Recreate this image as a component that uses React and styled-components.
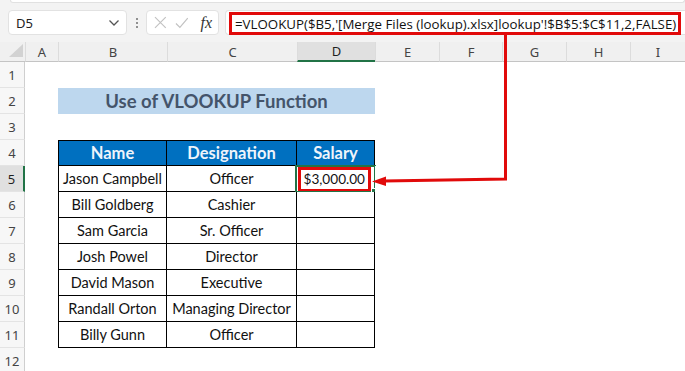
import React from "react";
import styled, { createGlobalStyle } from "styled-components";

const GlobalStyle = createGlobalStyle`
  html, body {
    margin: 0;
    padding: 0;
    background: #f3f3f3;
  }
  body {
    width: 685px;
    height: 371px;
    overflow: hidden;
  }
`;

const COLS = [
  { id: "A", w: 33 },
  { id: "B", w: 109 },
  { id: "C", w: 130 },
  { id: "D", w: 78 },
  { id: "E", w: 64 },
  { id: "F", w: 63 },
  { id: "G", w: 64 },
  { id: "H", w: 64 },
  { id: "I", w: 55 },
];

const PEOPLE = [
  ["Jason Campbell", "Officer", "$3,000.00"],
  ["Bill Goldberg", "Cashier", ""],
  ["Sam Garcia", "Sr. Officer", ""],
  ["Josh Powel", "Director", ""],
  ["David Mason", "Executive", ""],
  ["Randall Orton", "Managing Director", ""],
  ["Billy Gunn", "Officer", ""],
];

const FORMULA = "=VLOOKUP($B5,'[Merge Files (lookup).xlsx]lookup'!$B$5:$C$11,2,FALSE)";

const Page = styled.div`
  position: relative;
  width: 685px;
  height: 371px;
  overflow: hidden;
  background: #f3f3f3;
  font-family: "Noto Sans", "Open Sans", sans-serif;
`;

const Ribbon = styled.div`
  height: 2px;
  margin: 0 0 0 10px;
  background: #fff;
  border: 1px solid #e1e1e1;
  border-top: none;
  border-radius: 0 0 4px 4px;
`;

const FormulaBar = styled.div`
  display: flex;
  align-items: center;
  height: 39px;
  padding-left: 8px;
  box-sizing: border-box;
`;

const Box = styled.div`
  display: flex;
  align-items: center;
  height: 25px;
  box-sizing: border-box;
  background: #fff;
  border: 1px solid #e2e2e2;
  border-radius: 4px;
`;

const NameBox = styled(Box)`
  width: 119px;
  justify-content: space-between;
  padding: 0 6px 0 7px;
  font-size: 13px;
  color: #222;
`;

const Grip = styled.div`
  display: flex;
  flex-direction: column;
  gap: 2px;
  margin: 0 8px 0 9px;
  span {
    width: 2px;
    height: 2px;
    border-radius: 1px;
    background: #6f6f6f;
  }
`;

const FxBox = styled(Box)`
  width: 73px;
  gap: 8px;
  padding: 0 6px 0 7px;
`;

const FxLabel = styled.span`
  margin-left: 4px;
  font-family: "Liberation Serif", serif;
  font-style: italic;
  font-size: 16px;
  color: #333;
`;

const FormulaBox = styled(Box)`
  flex: 1;
  margin-left: 6px;
  padding-left: 3px;
  border-right: none;
  border-radius: 4px 0 0 4px;
`;

const FormulaText = styled.span`
  display: inline-flex;
  align-items: center;
  height: 23px;
  margin-top: 2px;
  box-sizing: border-box;
  padding: 0 2px 0 3px;
  border: 3px solid #e10a0a;
  font-family: "Open Sans", sans-serif;
  font-size: 13.3px;
  color: #111;
  white-space: nowrap;
`;

const Sheet = styled.div`
  display: grid;
  grid-template-columns: 25px ${COLS.map((c) => `${c.w}px`).join(" ")};
  grid-template-rows: 20px;
  grid-auto-rows: 26px;
  background: #fff;
`;

const Corner = styled.div`
  display: flex;
  align-items: flex-end;
  justify-content: flex-end;
  padding: 0 2px 4px 0;
  background: #f0f0f0;
  border-bottom: 1px solid #c4c4c4;
`;

const ColHead = styled.div`
  display: flex;
  align-items: center;
  justify-content: center;
  box-sizing: border-box;
  font-size: 13px;
  color: ${(p) => (p.$active ? "#1f1f1f" : "#444")};
  background: ${(p) => (p.$active ? "#e0e0e0" : "#f0f0f0")};
  border-left: 1px solid #dcdcdc;
  border-bottom: ${(p) => (p.$active ? "2px solid #217346" : "1px solid #c4c4c4")};
`;

const RowHead = styled.div`
  display: flex;
  align-items: center;
  justify-content: center;
  box-sizing: border-box;
  font-size: 13px;
  color: ${(p) => (p.$active ? "#1f1f1f" : "#444")};
  background: ${(p) => (p.$active ? "#e0e0e0" : "#f7f7f7")};
  border-bottom: 1px solid #e4e4e4;
  border-right: ${(p) => (p.$active ? "2px solid #217346" : "1px solid #cfcfcf")};
`;

const Cell = styled.div`
  position: relative;
  display: flex;
  align-items: center;
  justify-content: ${(p) => p.$align || "center"};
  box-sizing: border-box;
  grid-column: ${(p) => (p.$span ? `span ${p.$span}` : "auto")};
  padding-right: ${(p) => (p.$align === "flex-end" ? "3px" : "0")};
  font-family: Lato, "Open Sans", sans-serif;
  font-size: ${(p) => p.$size || 14.5}px;
  font-weight: ${(p) => (p.$bold ? 700 : 400)};
  color: ${(p) => p.$color || "#111"};
  background: ${(p) => p.$bg || "#fff"};
  white-space: nowrap;
  ${(p) =>
    p.$table &&
    `
    border-right: 1px solid #000;
    border-bottom: 1px solid #000;
  `}
  ${(p) => p.$left && "border-left: 1px solid #000;"}
  ${(p) => p.$top && "border-top: 1px solid #000;"}
`;

const Selection = styled.div`
  position: absolute;
  inset: -1px -2px -2px -2px;
  border: 2px solid #217346;
  pointer-events: none;
  &::after {
    content: "";
    position: absolute;
    right: -4px;
    bottom: -4px;
    width: 5px;
    height: 5px;
    background: #217346;
    border: 1px solid #fff;
  }
`;

const Marked = styled.span`
  display: inline-flex;
  align-items: center;
  height: 25px;
  margin-top: 1px;
  box-sizing: border-box;
  padding: 0 3px 0 3px;
  border: 3px solid #e10a0a;
  font-size: 13.6px;
`;

const Overlay = styled.svg`
  position: absolute;
  top: 0;
  left: 0;
  pointer-events: none;
`;

function Chevron() {
  return (
    <svg width="12" height="8" viewBox="0 0 12 8">
      <path d="M1.5 1.5 L6 6 L10.5 1.5" fill="none" stroke="#555" strokeWidth="1.3" />
    </svg>
  );
}

function CancelIcon() {
  return (
    <svg width="13" height="13" viewBox="0 0 13 13">
      <path d="M1 1 L12 12 M12 1 L1 12" stroke="#c2c2c2" strokeWidth="1.2" />
    </svg>
  );
}

function EnterIcon() {
  return (
    <svg width="14" height="12" viewBox="0 0 14 12">
      <path d="M1 6.5 L5 10.5 L13 1" fill="none" stroke="#c2c2c2" strokeWidth="1.2" />
    </svg>
  );
}

function SelectAll() {
  return (
    <svg width="14" height="13" viewBox="0 0 14 13">
      <polygon points="14,0 14,13 0,13" fill="#d2d2d2" />
    </svg>
  );
}

function renderRow(r) {
  const cells = [];
  const inTable = r >= 4 && r <= 11;
  cells.push(
    <RowHead key={`h${r}`} $active={r === 5}>
      {r}
    </RowHead>
  );
  cells.push(<Cell key={`a${r}`} />);

  if (r === 2) {
    cells.push(
      <Cell key="title" $span={3} $bg="#bdd7ee" $bold $size={18.5} $color="#44546a">
        Use of VLOOKUP Function
      </Cell>
    );
  } else if (r === 4) {
    ["Name", "Designation", "Salary"].forEach((t, i) => {
      cells.push(
        <Cell key={t} $table $top $left={i === 0} $bg="#0070c0" $bold $size={16.5} $color="#eef4fb">
          {t}
        </Cell>
      );
    });
  } else if (inTable) {
    const [name, role, salary] = PEOPLE[r - 5];
    cells.push(
      <Cell key={`b${r}`} $table $left>
        {name}
      </Cell>
    );
    cells.push(
      <Cell key={`c${r}`} $table>
        {role}
      </Cell>
    );
    cells.push(
      <Cell key={`d${r}`} $table $align="flex-end">
        {salary && <Marked>{salary}</Marked>}
        {r === 5 && <Selection />}
      </Cell>
    );
  } else {
    cells.push(<Cell key={`b${r}`} />, <Cell key={`c${r}`} />, <Cell key={`d${r}`} />);
  }

  ["E", "F", "G", "H", "I"].forEach((c) => cells.push(<Cell key={`${c}${r}`} />));
  return cells;
}

export default function App() {
  const rows = Array.from({ length: 12 }, (_, i) => i + 1);
  return (
    <Page>
      <GlobalStyle />
      <Ribbon />
      <FormulaBar>
        <NameBox>
          <span>D5</span>
          <Chevron />
        </NameBox>
        <Grip>
          <span />
          <span />
          <span />
        </Grip>
        <FxBox>
          <CancelIcon />
          <EnterIcon />
          <FxLabel>fx</FxLabel>
        </FxBox>
        <FormulaBox>
          <FormulaText>{FORMULA}</FormulaText>
        </FormulaBox>
      </FormulaBar>
      <Sheet>
        <Corner>
          <SelectAll />
        </Corner>
        {COLS.map((c) => (
          <ColHead key={c.id} $active={c.id === "D"}>
            {c.id}
          </ColHead>
        ))}
        {rows.map((r) => renderRow(r))}
      </Sheet>
      <Overlay width="685" height="371" viewBox="0 0 685 371">
        <path
          d="M505.5 35 L505.5 179 L384 181"
          fill="none"
          stroke="#e10a0a"
          strokeWidth="3"
          strokeLinejoin="miter"
        />
        <polygon points="372,181.5 386,176.5 386,186" fill="#e10a0a" />
      </Overlay>
    </Page>
  );
}
